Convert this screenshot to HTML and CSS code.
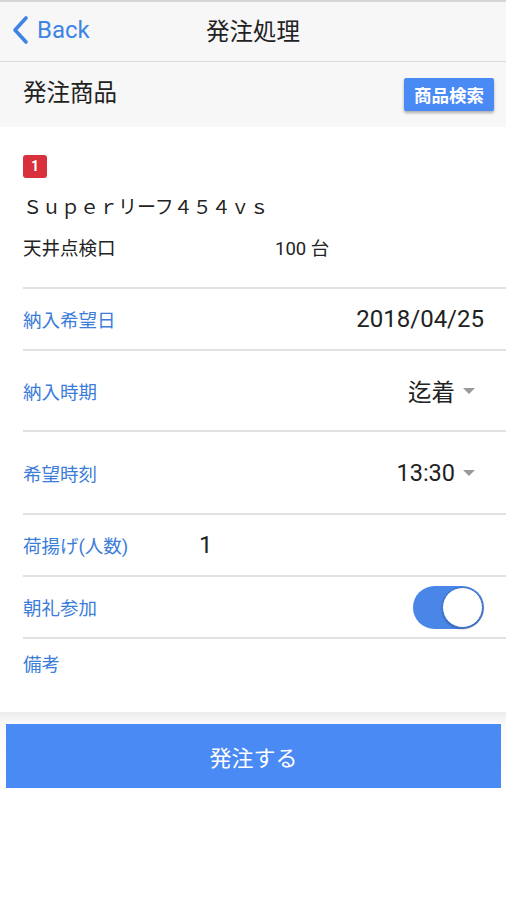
FILE: index.html
```html
<!DOCTYPE html>
<html lang="ja">

<head>
    <meta charset="UTF-8">
    <meta name="viewport" content="width=device-width, initial-scale=1.0">
    <title>発注処理</title>
    <link rel="stylesheet" href="styles.css">
</head>

<body>
    <div class="topbar">
        <a class="back" href="#">
            <svg width="18" height="30" viewBox="0 0 18 30">
                <path d="M15 3 L4 15 L15 27" fill="none" stroke="#3f84e5" stroke-width="3.6" stroke-linecap="round" stroke-linejoin="round"/>
            </svg>
            <span>Back</span>
        </a>
        <div class="title">発注処理</div>
        <div></div>
    </div>

    <div class="section-head">
        <span>発注商品</span>
        <button class="search-btn">商品検索</button>
    </div>

    <div class="item">
        <div class="badge">1</div>
        <div class="item-name">Ｓｕｐｅｒリーフ４５４ｖｓ</div>
        <div class="item-spec">
            <span class="spec-name">天井点検口</span>
            <span>100 台</span>
        </div>
    </div>

    <div class="form">
        <div class="row row-short">
            <span class="label">納入希望日</span>
            <span class="value">2018/04/25</span>
        </div>
        <div class="row row-tall">
            <span class="label">納入時期</span>
            <span class="value select">迄着<i class="caret"></i></span>
        </div>
        <div class="row row-tall2">
            <span class="label">希望時刻</span>
            <span class="value select">13:30<i class="caret"></i></span>
        </div>
        <div class="row row-short">
            <span class="label label-fixed">荷揚げ(人数)</span>
            <span class="value">1</span>
        </div>
        <div class="row row-short">
            <span class="label">朝礼参加</span>
            <div class="toggle"><div class="knob"></div></div>
        </div>
        <div class="row row-note">
            <span class="label">備考</span>
        </div>
    </div>

    <div class="footer">
        <button class="submit">発注する</button>
    </div>
</body>

</html>
```

FILE: styles.css
```css
body {
    margin: 0;
    background: #fff;
    font-family: Roboto, "Noto Sans CJK JP", sans-serif;
    color: #222;
}

.topbar {
    display: grid;
    grid-template-columns: 1fr auto 1fr;
    align-items: center;
    height: 56px;
    padding-bottom: 3px;
    border-top: 2px solid #d6d6d6;
    border-bottom: 1px solid #dcdcdc;
    background: #f7f7f7;
}

.back {
    display: flex;
    align-items: center;
    gap: 8px;
    padding-left: 11px;
    color: #3f84e5;
    font-size: 24px;
    text-decoration: none;
}

.title {
    font-size: 23.5px;
    color: #222;
}

.section-head {
    display: flex;
    justify-content: space-between;
    align-items: center;
    height: 65px;
    padding: 0 12px 0 23px;
    background: #f7f7f7;
    font-size: 23.5px;
    line-height: 30px;
}

.section-head span {
    margin-top: -4px;
}

.search-btn {
    height: 33px;
    width: 90px;
    padding: 0;
    border: none;
    border-radius: 2px;
    background: #4a8af4;
    color: #fff;
    font-family: "Noto Sans CJK JP", sans-serif;
    font-size: 17.5px;
    font-weight: bold;
    box-shadow: 0 2px 3px rgba(0, 0, 0, 0.3);
}

.item {
    padding: 28px 0 0 23px;
    height: 132px;
}

.badge {
    width: 24px;
    height: 23px;
    border-radius: 3px;
    background: #d9303e;
    color: #fff;
    font-size: 14px;
    font-weight: bold;
    line-height: 23px;
    text-align: center;
}

.item-name {
    margin-top: 16px;
    font-size: 19px;
    line-height: 28px;
}

.item-spec {
    display: flex;
    margin-top: 13px;
    font-size: 18.5px;
    line-height: 28px;
}

.spec-name {
    width: 252px;
}

.form {
    margin-left: 23px;
}

.row {
    display: flex;
    justify-content: space-between;
    align-items: center;
    box-sizing: border-box;
    padding-right: 22px;
    border-top: 2px solid #e2e2e2;
}

.row-short {
    height: 62px;
}

.row-tall {
    height: 81px;
}

.row-tall2 {
    height: 83px;
}

.row-note {
    height: 75px;
    align-items: flex-start;
    padding-top: 11px;
}

.label {
    color: #3b7dd8;
    font-size: 18.5px;
}

.label-fixed {
    width: 176px;
}

.row .label-fixed + .value {
    flex: 1;
}

.value {
    font-size: 24px;
    color: #222;
}

.select {
    display: flex;
    align-items: center;
    gap: 8px;
    margin-right: 9px;
    font-size: 23.5px;
}

.caret {
    width: 0;
    height: 0;
    border-left: 6px solid transparent;
    border-right: 6px solid transparent;
    border-top: 6px solid #999;
}

.toggle {
    display: flex;
    justify-content: flex-end;
    box-sizing: border-box;
    width: 71px;
    height: 43px;
    padding: 1px;
    border-radius: 22px;
    background: #4a86e8;
}

.knob {
    box-sizing: border-box;
    width: 41px;
    height: 41px;
    border-radius: 50%;
    border: 1px solid #3a6fc8;
    background: #fff;
    box-shadow: 0 1px 2px rgba(0, 0, 0, 0.3);
}

.footer {
    padding: 12px 5px 0 6px;
    background: linear-gradient(#ececec, #fafafa 12px, #fff 80px);
    height: 200px;
}

.submit {
    display: block;
    width: 100%;
    height: 64px;
    border: none;
    background: #4a8af4;
    color: #fff;
    font-family: "Noto Sans CJK JP", sans-serif;
    font-size: 22px;
}
```
